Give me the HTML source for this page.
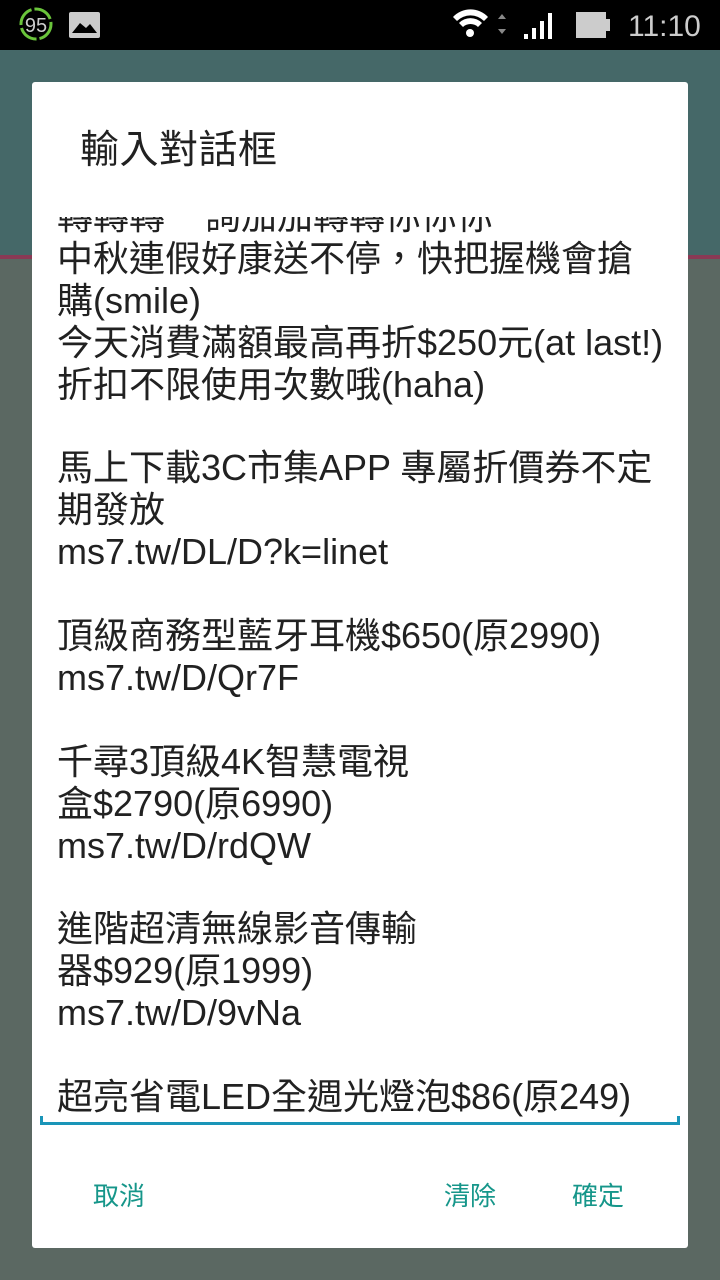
<!DOCTYPE html>
<html><head><meta charset="utf-8"><style>
body{margin:0;width:720px;height:1280px;position:relative;overflow:hidden;background:#5b6862;font-family:"Liberation Sans","Noto Sans CJK TC",sans-serif}
.sb{position:absolute;left:0;top:0;width:720px;height:50px;background:#000}
.bg1{position:absolute;left:0;top:50px;width:720px;height:205px;background:#456868}
.bg2{position:absolute;left:0;top:255px;width:720px;height:4px;background:#8a3a55}
.dlg{position:absolute;left:32px;top:82px;width:656px;height:1166px;background:#fff;border-radius:3px}
.title{position:absolute;left:48px;top:37px;font-size:39px;color:#212121;letter-spacing:0.5px}
.clip{position:absolute;left:0;top:135px;width:656px;height:986px;overflow:hidden}
.txt{position:absolute;left:25px;top:-21px;font-size:36px;line-height:41.9px;color:#212121;white-space:pre}
.ul{position:absolute;left:8px;top:1040px;width:640px;height:3px;background:#1a95b8}
.ul:before,.ul:after{content:"";position:absolute;top:-6px;width:3px;height:6px;background:#1a95b8}
.ul:before{left:0}.ul:after{right:0}
.btn{position:absolute;top:1094px;font-size:26px;color:#16968a}
</style></head><body>
<div class="sb">
<svg width="720" height="50" style="position:absolute;left:0;top:0">
<circle cx="36" cy="24" r="15" fill="none" stroke="#6ac43b" stroke-width="3" stroke-dasharray="20 3"/>
<text x="36" y="32" font-size="20" fill="#ccc" text-anchor="middle" font-family="Liberation Sans">95</text>
<rect x="69" y="12" width="31" height="26" rx="2" fill="#ccc"/>
<path d="M72 33 L80 23 L86 28 L90 24 L97 33 Z" fill="#000"/>
<path d="M453 17 A24 24 0 0 1 488 17 L484 21 A19 19 0 0 0 457 21 Z M459 23 A16 16 0 0 1 482 23 L478 27 A11 11 0 0 0 463 27 Z" fill="#fff"/>
<circle cx="470" cy="33" r="4" fill="#fff"/>
<path d="M498 19 L502 14 L506 19 Z M498 29 L506 29 L502 34 Z" fill="#888"/>
<rect x="524" y="34" width="4" height="5" fill="#fff"/><rect x="532" y="28" width="4" height="11" fill="#fff"/><rect x="540" y="21" width="4" height="18" fill="#fff"/><rect x="548" y="13" width="4" height="26" fill="#fff"/>
<rect x="576" y="12" width="30" height="26" fill="#ccc"/><rect x="606" y="19" width="4" height="12" fill="#ccc"/>
<text x="628" y="36" font-size="30" fill="#ccc" font-family="Liberation Sans">11:10</text>
</svg></div>
<div class="bg1"></div><div class="bg2"></div>
<div class="dlg">
<div class="title">輸入對話框</div>
<div class="clip"><div class="txt">轉轉轉    詢加加轉轉你你你
中秋連假好康送不停，快把握機會搶
購(smile)
今天消費滿額最高再折$250元(at last!)
折扣不限使用次數哦(haha)

馬上下載3C市集APP 專屬折價券不定
期發放
ms7.tw/DL/D?k=linet

頂級商務型藍牙耳機$650(原2990)
ms7.tw/D/Qr7F

千尋3頂級4K智慧電視
盒$2790(原6990)
ms7.tw/D/rdQW

進階超清無線影音傳輸
器$929(原1999)
ms7.tw/D/9vNa

超亮省電LED全週光燈泡$86(原249)</div></div>
<div class="ul"></div>
<div class="btn" style="left:61px">取消</div>
<div class="btn" style="left:412px">清除</div>
<div class="btn" style="left:540px">確定</div>
</div>
</body></html>
